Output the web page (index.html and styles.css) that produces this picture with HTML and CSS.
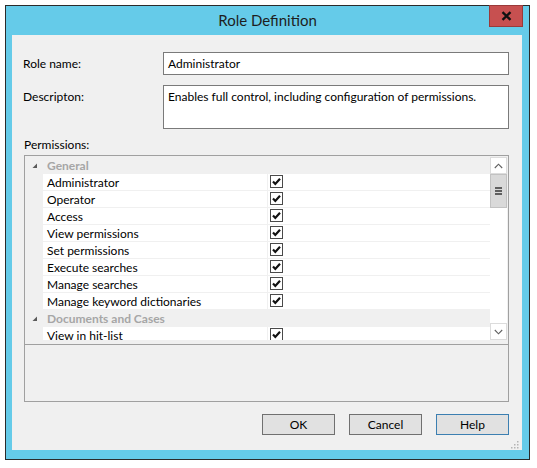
FILE: index.html
```html
<!DOCTYPE html>
<html>
<head>
<meta charset="utf-8">
<link rel="stylesheet" href="styles.css">
</head>
<body>
<div class="window">
  <div class="titlebar">
    <span class="title">Role Definition</span>
    <div class="close">
      <svg width="11" height="10" viewBox="0 0 11 10"><path d="M1.5 1.2 L9.5 8.8 M9.5 1.2 L1.5 8.8" stroke="#111" stroke-width="2.3" fill="none"/></svg>
    </div>
  </div>
  <div class="client">
    <div class="field">
      <label class="lbl">Role name:</label>
      <div class="input">Administrator</div>
    </div>
    <div class="field desc">
      <label class="lbl">Descripton:</label>
      <div class="input area">Enables full control, including configuration of permissions.</div>
    </div>
    <div class="perm-lbl">Permissions:</div>
    <div class="panel">
      <div class="viewport">
        <div class="rows">
          <div class="group"><span class="gutter"><svg width="6" height="6" viewBox="0 0 6 6"><path d="M5 0.5 L5 5 L0.5 5 Z" fill="#5a5a5a"/></svg></span><span class="gname">General</span></div>
          <div class="row"><span class="gutter"></span><span class="name">Administrator</span><span class="value"><span class="cb"><svg width="11" height="11" viewBox="0 0 11 11"><path d="M2 5.6 L4.3 8 L9 2.8" stroke="#111" stroke-width="2.2" fill="none"/></svg></span></span></div>
          <div class="row"><span class="gutter"></span><span class="name">Operator</span><span class="value"><span class="cb"><svg width="11" height="11" viewBox="0 0 11 11"><path d="M2 5.6 L4.3 8 L9 2.8" stroke="#111" stroke-width="2.2" fill="none"/></svg></span></span></div>
          <div class="row"><span class="gutter"></span><span class="name">Access</span><span class="value"><span class="cb"><svg width="11" height="11" viewBox="0 0 11 11"><path d="M2 5.6 L4.3 8 L9 2.8" stroke="#111" stroke-width="2.2" fill="none"/></svg></span></span></div>
          <div class="row"><span class="gutter"></span><span class="name">View permissions</span><span class="value"><span class="cb"><svg width="11" height="11" viewBox="0 0 11 11"><path d="M2 5.6 L4.3 8 L9 2.8" stroke="#111" stroke-width="2.2" fill="none"/></svg></span></span></div>
          <div class="row"><span class="gutter"></span><span class="name">Set permissions</span><span class="value"><span class="cb"><svg width="11" height="11" viewBox="0 0 11 11"><path d="M2 5.6 L4.3 8 L9 2.8" stroke="#111" stroke-width="2.2" fill="none"/></svg></span></span></div>
          <div class="row"><span class="gutter"></span><span class="name">Execute searches</span><span class="value"><span class="cb"><svg width="11" height="11" viewBox="0 0 11 11"><path d="M2 5.6 L4.3 8 L9 2.8" stroke="#111" stroke-width="2.2" fill="none"/></svg></span></span></div>
          <div class="row"><span class="gutter"></span><span class="name">Manage searches</span><span class="value"><span class="cb"><svg width="11" height="11" viewBox="0 0 11 11"><path d="M2 5.6 L4.3 8 L9 2.8" stroke="#111" stroke-width="2.2" fill="none"/></svg></span></span></div>
          <div class="row"><span class="gutter"></span><span class="name">Manage keyword dictionaries</span><span class="value"><span class="cb"><svg width="11" height="11" viewBox="0 0 11 11"><path d="M2 5.6 L4.3 8 L9 2.8" stroke="#111" stroke-width="2.2" fill="none"/></svg></span></span></div>
          <div class="group"><span class="gutter"><svg width="6" height="6" viewBox="0 0 6 6"><path d="M5 0.5 L5 5 L0.5 5 Z" fill="#5a5a5a"/></svg></span><span class="gname">Documents and Cases</span></div>
          <div class="row last"><span class="gutter"></span><span class="name">View in hit-list</span><span class="value"><span class="cb"><svg width="11" height="11" viewBox="0 0 11 11"><path d="M2 5.6 L4.3 8 L9 2.8" stroke="#111" stroke-width="2.2" fill="none"/></svg></span></span></div>
        </div>
        <div class="scrollbar">
          <div class="sbtn"><svg width="9" height="6" viewBox="0 0 9 6"><path d="M0.8 5 L4.5 1.2 L8.2 5" stroke="#606060" stroke-width="1.1" fill="none"/></svg></div>
          <div class="thumb"><span></span><span></span><span></span></div>
          <div class="track"></div>
          <div class="sbtn"><svg width="9" height="6" viewBox="0 0 9 6"><path d="M0.8 1 L4.5 4.8 L8.2 1" stroke="#606060" stroke-width="1.1" fill="none"/></svg></div>
        </div>
      </div>
      <div class="help-pane"></div>
    </div>
    <div class="buttons">
      <div class="btn">OK</div>
      <div class="btn">Cancel</div>
      <div class="btn default">Help</div>
    </div>
    <svg class="grip" width="9" height="9" viewBox="0 0 9 9">
      <rect x="7" y="1" width="1.5" height="1.5" fill="#b4b4b4"/>
      <rect x="4" y="4" width="1.5" height="1.5" fill="#b4b4b4"/>
      <rect x="7" y="4" width="1.5" height="1.5" fill="#b4b4b4"/>
      <rect x="1" y="7" width="1.5" height="1.5" fill="#b4b4b4"/>
      <rect x="4" y="7" width="1.5" height="1.5" fill="#b4b4b4"/>
      <rect x="7" y="7" width="1.5" height="1.5" fill="#b4b4b4"/>
    </svg>
  </div>
</div>
</body>
</html>
```

FILE: styles.css
```css
* { box-sizing: border-box; }
html, body { margin: 0; padding: 0; background: #ffffff; }
body {
  font-family: Lato, "Open Sans", "Liberation Sans", sans-serif;
  font-size: 12px;
  color: #000;
}
.window {
  margin: 5px 0 0 5px;
  width: 525px;
  height: 455px;
  border: 1px solid #2b2b2b;
  background: #65cbe9;
  padding: 0 7px 9px 6px;
  display: flex;
  flex-direction: column;
}
.titlebar {
  position: relative;
  height: 29px;
  display: flex;
  align-items: center;
  justify-content: center;
}
.title {
  font-size: 15px;
  color: #1e1e1e;
  margin-top: -1px;
  margin-left: 1px;
}
.close {
  position: absolute;
  right: -1px;
  top: -1px;
  width: 34px;
  height: 22px;
  background: #c75050;
  border: 1px solid #9a3a3a;
  display: flex;
  align-items: center;
  justify-content: center;
}
.client {
  position: relative;
  flex: 1;
  background: #f0f0f0;
  padding: 17px 13px 0 11px;
  display: flex;
  flex-direction: column;
}
.field {
  display: flex;
  align-items: center;
  height: 23px;
}
.field.desc {
  margin-top: 10px;
  height: 44px;
  align-items: flex-start;
}
.lbl {
  width: 140px;
}
.field.desc .lbl { padding-top: 4px; }
.input {
  width: 346px;
  height: 23px;
  background: #fff;
  border: 1px solid #7a7a7a;
  padding: 2px 4px;
  line-height: 17px;
  white-space: nowrap;
}
.input.area { height: 44px; }
.perm-lbl {
  margin-top: 8px;
  height: 17px;
  line-height: 16px;
  padding-left: 1px;
}
.panel {
  margin-top: 1px;
  margin-left: 1px;
  width: 485px;
  height: 247px;
  border: 1px solid #a0a0a0;
  background: #f0f0f0;
  display: flex;
  flex-direction: column;
}
.viewport {
  height: 184px;
  display: flex;
  padding-top: 1px;
  padding-right: 1px;
}
.rows {
  width: 465px;
  height: 183px;
  overflow: hidden;
}
.row, .group {
  display: flex;
  height: 17px;
}
.row.last { height: 15px; }
.gutter {
  width: 18px;
  flex: none;
  background: #f0f0f0;
  display: flex;
  align-items: center;
  justify-content: center;
  padding-left: 1px;
}
.group { background: #f0f0f0; }
.gname {
  padding-left: 4px;
  font-weight: bold;
  color: #a6a6a6;
  line-height: 17px;
}
.name {
  width: 225px;
  flex: none;
  background: #fff;
  border-right: 1px solid #f0f0f0;
  border-bottom: 1px solid #f0f0f0;
  padding-left: 4px;
  padding-top: 1px;
  line-height: 15px;
  white-space: nowrap;
}
.row.last .name { border-bottom: none; }
.row.last .value { border-bottom: none; }
.value {
  width: 222px;
  flex: none;
  background: #fff;
  border-bottom: 1px solid #f0f0f0;
  padding-left: 2px;
  padding-top: 1px;
}
.cb {
  display: flex;
  align-items: center;
  justify-content: center;
  width: 13px;
  height: 13px;
  border: 1px solid #4a4a4a;
  background: #fff;
}
.scrollbar {
  width: 17px;
  height: 183px;
  background: #fff;
  display: flex;
  flex-direction: column;
}
.sbtn {
  height: 17px;
  border: 1px solid #dcdcdc;
  background: #fff;
  display: flex;
  align-items: center;
  justify-content: center;
}
.thumb {
  height: 34px;
  background: #d9d9d9;
  border: 1px solid #c2c2c2;
  display: flex;
  flex-direction: column;
  align-items: center;
  justify-content: center;
  gap: 1px;
}
.thumb span {
  width: 7px;
  height: 2px;
  background: #5f5f5f;
}
.track { flex: 1; background: #fff; }
.help-pane {
  flex: 1;
  margin-top: 4px;
  border-top: 1px solid #a0a0a0;
  background: #f0f0f0;
}
.buttons {
  margin-top: 12px;
  width: 486px;
  display: flex;
  justify-content: flex-end;
  gap: 14px;
}
.btn {
  width: 73px;
  height: 21px;
  background: #e1e1e1;
  border: 1px solid #707070;
  display: flex;
  align-items: center;
  justify-content: center;
}
.btn.default { border-color: #3c7fb1; }
.grip {
  position: absolute;
  right: 3px;
  bottom: 1px;
}
```
